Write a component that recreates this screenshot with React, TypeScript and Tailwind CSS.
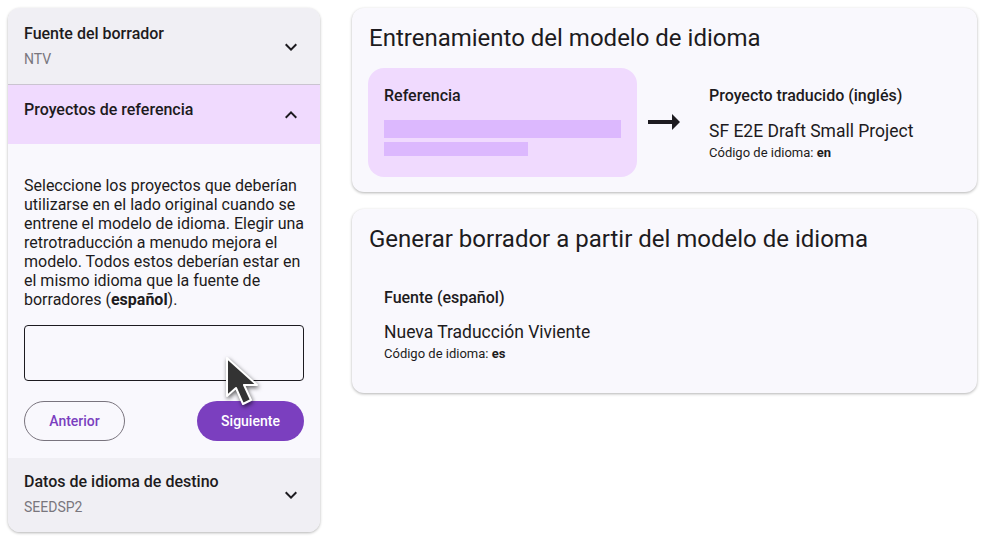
import React from 'react';

const ExpandMore = ({ up = false }: { up?: boolean }) => (
  <svg width="24" height="24" viewBox="0 0 24 24" className={up ? 'rotate-180' : ''} fill="#1d1b20">
    <path d="M16.59 8.59L12 13.17 7.41 8.59 6 10l6 6 6-6z" />
  </svg>
);

const ArrowRightAlt = () => (
  <svg width="48" height="48" viewBox="0 0 24 24" fill="#1d1b20">
    <path d="M16.01 11H4v2h12.01v3L20 12l-3.99-4z" />
  </svg>
);

const Pointer = () => (
  <svg width="50" height="56" viewBox="0 0 50 56" className="absolute left-[221px] top-[352px] drop-shadow-[1px_2px_2px_rgba(0,0,0,0.6)]">
    <path d="M6 6 L6 44 L15 36 L22 52 L30 48 L23 33 L36 33 Z" fill="#333333" stroke="#ffffff" strokeWidth="2" strokeLinejoin="round" />
  </svg>
);

const StepHeader = ({ title, sub, open = false, pad = 'pt-4 pb-[15px]' }: { title: string; sub?: string; open?: boolean; pad?: string }) => (
  <div
    className={`flex justify-between items-center pl-4 pr-[17px] ${
      open ? 'bg-[#f0dafe] h-[59px]' : 'bg-[#f0eff4]'
    } ${sub ? pad : ''}`}
  >
    <div className={`self-start ${open ? 'pt-[15px]' : ''}`}>
      <div className="text-base leading-5 font-medium text-[#1d1b20]">{title}</div>
      {sub && <div className="mt-[5px] text-sm leading-5 text-[#79767d]">{sub}</div>}
    </div>
    <ExpandMore up={open} />
  </div>
);

export default function App() {
  return (
    <div className="relative flex items-start gap-8 p-2 bg-white min-h-[541px] text-[#1d1b20] [font-family:Roboto,'Noto_Sans',sans-serif]">
      {/* Stepper */}
      <div className="w-[312px] shrink-0 rounded-xl overflow-hidden shadow-[0_1px_3px_rgba(0,0,0,0.3)] bg-[#f9f8fd]">
        <div className="border-b border-[#cac4d0]">
          <StepHeader title="Fuente del borrador" sub="NTV" />
        </div>
        <StepHeader title="Proyectos de referencia" open />
        <div className="px-4 pt-8 pb-[17px]">
          <p className="text-base leading-[19px]">
            Seleccione los proyectos que deberían utilizarse en el lado original cuando se entrene el modelo de idioma. Elegir una retrotraducción a menudo mejora el modelo. Todos estos deberían estar en el mismo idioma que la fuente de borradores (<b className="font-bold">español</b>).
          </p>
          <div className="mt-4 h-14 rounded border border-[#1d1b20]" />
          <div className="mt-5 flex justify-between">
            <button className="h-10 w-[101px] rounded-full border border-[#79747e] text-sm font-medium text-[#7b3fbf]">
              Anterior
            </button>
            <button className="h-10 w-[107px] rounded-full bg-[#7b3fbf] text-sm font-medium text-white">
              Siguiente
            </button>
          </div>
        </div>
        <StepHeader title="Datos de idioma de destino" sub="SEEDSP2" pad="pt-[14px] pb-[15px]" />
      </div>

      {/* Summary */}
      <div className="flex-1 flex flex-col gap-[17px]">
        <div className="rounded-xl bg-[#f9f8fd] shadow-[0_1px_3px_rgba(0,0,0,0.3)] pt-[14px] pb-[15px] px-4">
          <h2 className="pl-px text-2xl leading-8 font-normal">Entrenamiento del modelo de idioma</h2>
          <div className="mt-[14px] flex items-start">
            <div className="w-[269px] h-[109px] rounded-2xl bg-[#f0dafe] px-4 pt-[18px]">
              <div className="text-base leading-5 font-medium">Referencia</div>
              <div className="mt-[14px] h-[18px] w-[237px] bg-[#dcb8fe]" />
              <div className="mt-1 h-[14px] w-[144px] bg-[#dcb8fe]" />
            </div>
            <div className="ml-[3px] mt-[30px]">
              <ArrowRightAlt />
            </div>
            <div className="ml-[21px] pt-[18px]">
              <div className="text-base leading-5 font-medium">Proyecto traducido (inglés)</div>
              <div className="mt-[14px] text-[17.5px] leading-[22px]">SF E2E Draft Small Project</div>
              <div className="mt-[2px] text-[13px] leading-[18px]">
                Código de idioma: <b className="font-bold">en</b>
              </div>
            </div>
          </div>
        </div>

        <div className="rounded-xl bg-[#f9f8fd] shadow-[0_1px_3px_rgba(0,0,0,0.3)] pt-[14px] pb-[15px] px-4">
          <h2 className="pl-px text-2xl leading-8 font-normal">Generar borrador a partir del modelo de idioma</h2>
          <div className="mt-[15px] px-4 pt-[18px] pb-[15px]">
            <div className="text-base leading-5 font-medium">Fuente (español)</div>
            <div className="mt-[13px] text-[17.5px] leading-[22px]">Nueva Traducción Viviente</div>
            <div className="mt-[2px] text-[13px] leading-[18px]">
              Código de idioma: <b className="font-bold">es</b>
            </div>
          </div>
        </div>
      </div>

      <Pointer />
    </div>
  );
}
